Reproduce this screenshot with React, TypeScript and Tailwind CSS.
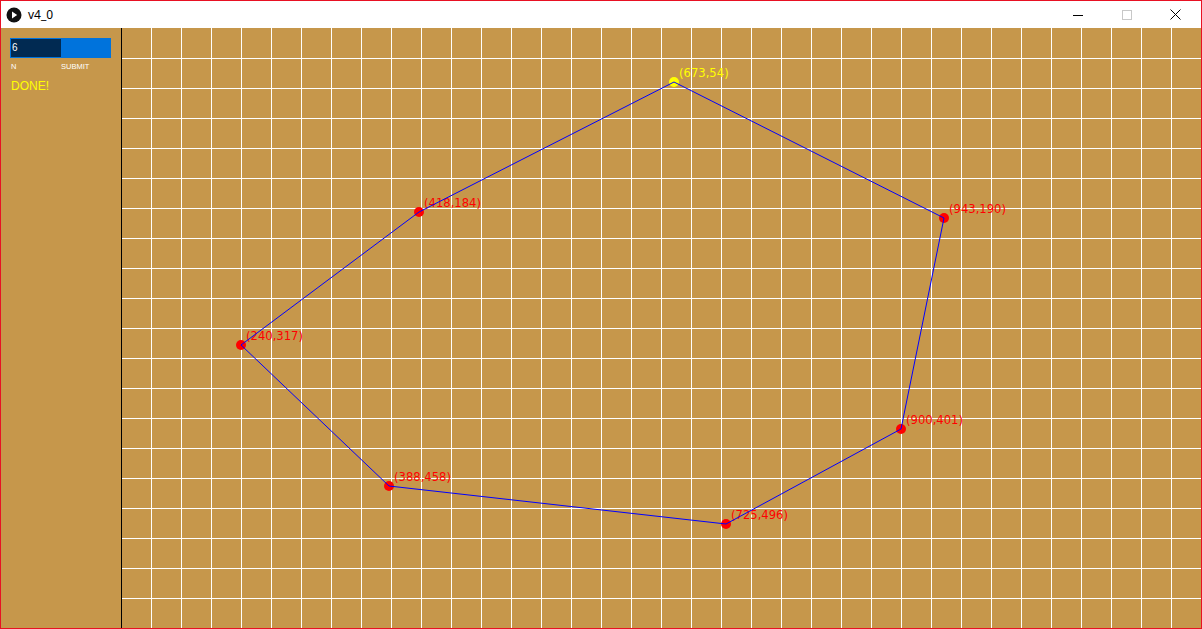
import React from 'react';

// canvas coordinates, screen = canvas + (1, 28)
const points = [
  { x: 673, y: 54, active: true },
  { x: 943, y: 190 },
  { x: 900, y: 401 },
  { x: 725, y: 496 },
  { x: 388, y: 458 },
  { x: 240, y: 317 },
  { x: 418, y: 184 },
];

const vLines: number[] = [];
for (let x = 150; x < 1200; x += 30) vLines.push(x);
const hLines: number[] = [];
for (let y = 30; y < 600; y += 30) hLines.push(y);

const TitleBar = () => (
  <div className="h-[27px] bg-white flex items-center shrink-0">
    <svg width="16" height="16" viewBox="0 0 16 16" className="ml-[5px]">
      <circle cx="8" cy="8" r="7.5" fill="#111" />
      <path d="M6 4.6 L11.2 8 L6 11.4 Z" fill="#fff" />
    </svg>
    <span className="ml-[6px] text-[12px] text-black" style={{ fontFamily: '"Noto Sans", "Liberation Sans", sans-serif' }}>
      v4_0
    </span>
    <div className="ml-auto flex items-center h-full mr-[1px]">
      <div className="w-[49px] h-full flex items-center justify-center">
        <svg width="10" height="10" viewBox="0 0 10 10">
          <path d="M0 5.5 H10" stroke="#000" strokeWidth="1" />
        </svg>
      </div>
      <div className="w-[49px] h-full flex items-center justify-center">
        <svg width="10" height="10" viewBox="0 0 10 10">
          <rect x="0.5" y="0.5" width="9" height="9" fill="none" stroke="#c8c8c8" strokeWidth="1" />
        </svg>
      </div>
      <div className="w-[49px] h-full flex items-center justify-center">
        <svg width="11" height="11" viewBox="0 0 11 11">
          <path d="M0.5 0.5 L10.5 10.5 M10.5 0.5 L0.5 10.5" stroke="#000" strokeWidth="1" />
        </svg>
      </div>
    </div>
  </div>
);

const SidePanel = () => (
  <div className="w-[121px] h-full bg-[#c6974b] border-r border-black shrink-0 pt-[10px] pl-[9px]"
    style={{ fontFamily: '"Liberation Sans", Arial, sans-serif' }}>
    <div className="w-[101px] h-[20px] bg-[#0073dc] p-px flex">
      <div className="w-[50px] h-full bg-[#012a52] text-white text-[10px] leading-[18px] pl-[1px]">6</div>
    </div>
    <div className="flex text-white text-[7.5px] leading-none mt-[5px] pl-[1px]">
      <span className="w-[50px]">N</span>
      <span>SUBMIT</span>
    </div>
    <div className="text-[#ffff00] text-[12px] leading-none mt-[9px] pl-[1px]">DONE!</div>
  </div>
);

const Board = () => {
  const poly = points.map(p => `${p.x},${p.y}`).join(' ');
  return (
    <svg width="1079" height="600" viewBox="121 0 1079 600" className="block bg-[#c6974b]">
      <g shapeRendering="crispEdges" stroke="#ffffff" strokeWidth="1">
        {vLines.map(x => (
          <line key={'v' + x} x1={x + 0.5} y1={0} x2={x + 0.5} y2={600} />
        ))}
        {hLines.map(y => (
          <line key={'h' + y} x1={121} y1={y + 0.5} x2={1200} y2={y + 0.5} />
        ))}
      </g>
      {points.map(p => (
        <g key={p.x + '-' + p.y}>
          <circle cx={p.x} cy={p.y} r={5} fill={p.active ? '#ffff00' : '#ff0000'} />
          <text
            x={p.x + 5}
            y={p.y - 5}
            fontSize="11.6"
            fill={p.active ? '#ffff00' : '#ff0000'}
            style={{ fontFamily: '"DejaVu Sans", "Liberation Sans", sans-serif' }}
          >
            ({p.x},{p.y})
          </text>
        </g>
      ))}
      <polygon points={poly} fill="none" stroke="#0000ff" strokeWidth="1" />
    </svg>
  );
};

export default function App() {
  return (
    <div className="w-[1202px] h-[629px] border border-[#e81123] bg-white flex flex-col overflow-hidden">
      <TitleBar />
      <div className="flex h-[600px]">
        <SidePanel />
        <Board />
      </div>
    </div>
  );
}
